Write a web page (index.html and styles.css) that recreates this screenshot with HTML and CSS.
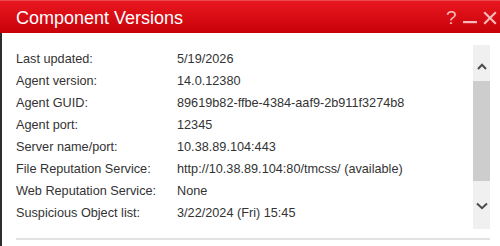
FILE: index.html
```html
<!DOCTYPE html>
<html>
<head>
<meta charset="utf-8">
<link rel="stylesheet" href="styles.css">
</head>
<body>
<div class="window">
  <div class="titlebar">
    <span class="title">Component Versions</span>
    <div class="controls">
      <span class="help">?</span>
      <svg class="min" width="14" height="14" viewBox="0 0 14 14"><rect x="0" y="10" width="14" height="2.2" fill="#f6b9bb"/></svg>
      <svg class="close" width="14" height="14" viewBox="0 0 14 14"><path d="M1.2 1.2 L12.8 12.8 M12.8 1.2 L1.2 12.8" stroke="#f6b9bb" stroke-width="2.2" fill="none"/></svg>
    </div>
  </div>
  <div class="body">
    <div class="content">
      <div class="rows">
        <div class="label">Last updated:</div><div class="value">5/19/2026</div>
        <div class="label">Agent version:</div><div class="value">14.0.12380</div>
        <div class="label">Agent GUID:</div><div class="value">89619b82-ffbe-4384-aaf9-2b911f3274b8</div>
        <div class="label">Agent port:</div><div class="value">12345</div>
        <div class="label">Server name/port:</div><div class="value">10.38.89.104:443</div>
        <div class="label">File Reputation Service:</div><div class="value">http://10.38.89.104:80/tmcss/ (available)</div>
        <div class="label">Web Reputation Service:</div><div class="value">None</div>
        <div class="label">Suspicious Object list:</div><div class="value">3/22/2024 (Fri) 15:45</div>
      </div>
      <div class="scrollbar">
        <div class="btn up"><svg width="10" height="7" viewBox="0 0 10 7"><path d="M1 6 L5 1.8 L9 6" stroke="#4a4a4a" stroke-width="2" fill="none"/></svg></div>
        <div class="thumb"></div>
        <div class="btn down"><svg width="12" height="8" viewBox="0 0 12 8"><path d="M1 1.5 L6 6.2 L11 1.5" stroke="#4a4a4a" stroke-width="2" fill="none"/></svg></div>
      </div>
    </div>
    <div class="sep"></div>
  </div>
</div>
</body>
</html>
```
FILE: styles.css
```css
html, body {
  margin: 0;
  padding: 0;
  background: #fff;
}
.window {
  width: 500px;
  height: 246px;
  display: flex;
  flex-direction: column;
  font-family: "Liberation Sans", Arial, sans-serif;
  overflow: hidden;
}
.titlebar {
  height: 32px;
  border-top: 1px solid #ea4a52;
  background: linear-gradient(#e8171f, #c80109);
  display: flex;
  align-items: center;
  justify-content: space-between;
  padding: 0 3px 0 16px;
  flex-shrink: 0;
}
.title {
  color: #fff;
  font-size: 18px;
  line-height: 20px;
  padding-top: 2px;
}
.controls {
  display: flex;
  align-items: center;
  padding-top: 2px;
}
.help {
  color: #f6b9bb;
  font-size: 19px;
  line-height: 20px;
  width: 17px;
}
.min {
  margin-right: 6px;
}
.body {
  flex: 1;
  border-left: 2px solid #2e2e2e;
  display: flex;
  flex-direction: column;
  padding: 12px 10px 0 14px;
}
.content {
  display: flex;
  justify-content: space-between;
}
.rows {
  display: grid;
  grid-template-columns: 161px auto;
  grid-auto-rows: 22px;
  align-content: start;
  padding-top: 3px;
  font-size: 12.7px;
  color: #333;
}
.label, .value {
  line-height: 22px;
  white-space: nowrap;
}
.scrollbar {
  width: 17px;
  height: 184px;
  background: #f0f0f0;
  display: flex;
  flex-direction: column;
}
.btn {
  display: flex;
  align-items: center;
  justify-content: center;
}
.up {
  height: 36px;
  padding-top: 6px;
  box-sizing: border-box;
}
.thumb {
  height: 100px;
  background: #cdcdcd;
}
.down {
  flex: 1;
  padding-top: 2px;
}
.sep {
  margin-top: 9px;
  height: 2px;
  background: #e2e2e2;
}
```
